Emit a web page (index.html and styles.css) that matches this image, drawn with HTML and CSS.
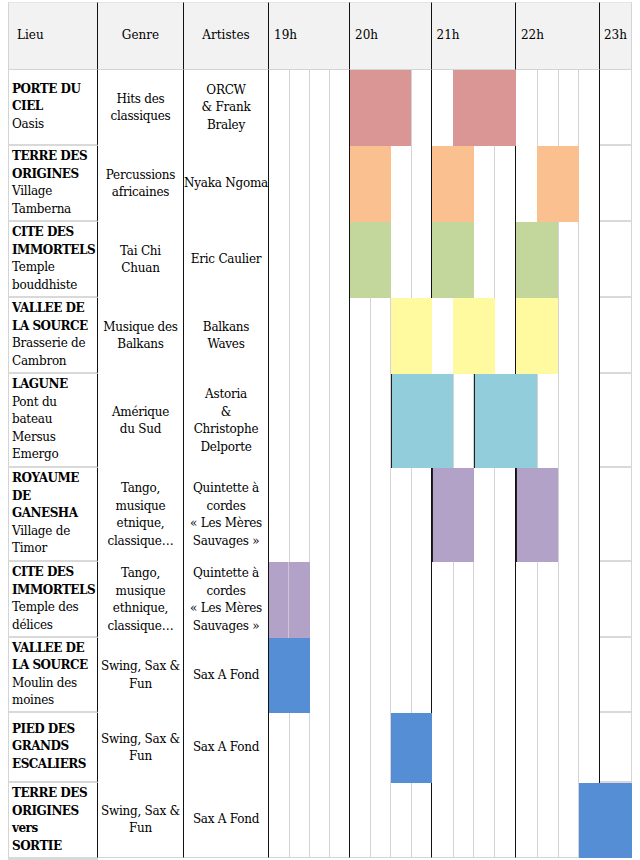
FILE: index.html
```html
<!DOCTYPE html>
<html lang="fr">
<head>
<meta charset="utf-8">
<title>Programme des concerts</title>
<link rel="stylesheet" href="styles.css">
</head>
<body>
<div class="schedule">
  <div class="h h-lieu">Lieu</div>
  <div class="h h-c">Genre</div>
  <div class="h h-c">Artistes</div>
  <div class="h h-hour">19h</div>
  <div class="h h-hour">20h</div>
  <div class="h h-hour">21h</div>
  <div class="h h-hour">22h</div>
  <div class="h h-last">23h</div>

  <div class="lane l19"></div>
  <div class="lane l20"></div>
  <div class="lane l21"></div>
  <div class="lane l22"></div>

  <div class="cell lieu"><div><b>PORTE DU<br>CIEL</b><br>Oasis</div></div>
  <div class="cell info"><div>Hits des<br>classiques</div></div>
  <div class="cell info"><div>ORCW<br>&amp; Frank<br>Braley</div></div>
  <div class="late"></div>

  <div class="cell lieu"><div><b>TERRE DES<br>ORIGINES</b><br>Village<br>Tamberna</div></div>
  <div class="cell info"><div>Percussions<br>africaines</div></div>
  <div class="cell info"><div>Nyaka Ngoma</div></div>
  <div class="late"></div>

  <div class="cell lieu"><div><b>CITE DES<br>IMMORTELS</b><br>Temple<br>bouddhiste</div></div>
  <div class="cell info"><div>Tai Chi<br>Chuan</div></div>
  <div class="cell info"><div>Eric Caulier</div></div>
  <div class="late"></div>

  <div class="cell lieu"><div><b>VALLEE DE<br>LA SOURCE</b><br>Brasserie de<br>Cambron</div></div>
  <div class="cell info"><div>Musique des<br>Balkans</div></div>
  <div class="cell info"><div>Balkans<br>Waves</div></div>
  <div class="late"></div>

  <div class="cell lieu"><div><b>LAGUNE</b><br>Pont du<br>bateau<br>Mersus<br>Emergo</div></div>
  <div class="cell info"><div>Amérique<br>du Sud</div></div>
  <div class="cell info"><div>Astoria<br>&amp;<br>Christophe<br>Delporte</div></div>
  <div class="late"></div>

  <div class="cell lieu"><div><b>ROYAUME<br>DE<br>GANESHA</b><br>Village de<br>Timor</div></div>
  <div class="cell info"><div>Tango,<br>musique<br>etnique,<br>classique…</div></div>
  <div class="cell info"><div>Quintette à<br>cordes<br>«&nbsp;Les Mères<br>Sauvages&nbsp;»</div></div>
  <div class="late"></div>

  <div class="cell lieu"><div><b>CITE DES<br>IMMORTELS</b><br>Temple des<br>délices</div></div>
  <div class="cell info"><div>Tango,<br>musique<br>ethnique,<br>classique…</div></div>
  <div class="cell info"><div>Quintette à<br>cordes<br>«&nbsp;Les Mères<br>Sauvages&nbsp;»</div></div>
  <div class="late"></div>

  <div class="cell lieu"><div><b>VALLEE DE<br>LA SOURCE</b><br>Moulin des<br>moines</div></div>
  <div class="cell info"><div>Swing, Sax &amp;<br>Fun</div></div>
  <div class="cell info"><div>Sax A Fond</div></div>
  <div class="late"></div>

  <div class="cell lieu"><div><b>PIED DES<br>GRANDS<br>ESCALIERS</b></div></div>
  <div class="cell info"><div>Swing, Sax &amp;<br>Fun</div></div>
  <div class="cell info"><div>Sax A Fond</div></div>
  <div class="late"></div>

  <div class="cell lieu last"><div><b>TERRE DES<br>ORIGINES<br>vers<br>SORTIE</b></div></div>
  <div class="cell info last"><div>Swing, Sax &amp;<br>Fun</div></div>
  <div class="cell info last"><div>Sax A Fond</div></div>
  <div class="late"></div>

  <div class="blk red" style="grid-area: 2 / 8 / 3 / 11"></div>
  <div class="blk red" style="grid-area: 2 / 13 / 3 / 16"></div>

  <div class="blk orange" style="grid-area: 3 / 8 / 4 / 10"></div>
  <div class="blk orange" style="grid-area: 3 / 12 / 4 / 14"></div>
  <div class="blk orange" style="grid-area: 3 / 17 / 4 / 19"></div>

  <div class="blk green" style="grid-area: 4 / 8 / 5 / 10"></div>
  <div class="blk green" style="grid-area: 4 / 12 / 5 / 14"></div>
  <div class="blk green" style="grid-area: 4 / 16 / 5 / 18"></div>

  <div class="blk yellow" style="grid-area: 5 / 10 / 6 / 12"></div>
  <div class="blk yellow" style="grid-area: 5 / 13 / 6 / 15"></div>
  <div class="blk yellow" style="grid-area: 5 / 16 / 6 / 18"></div>

  <div class="blk cyan edge" style="grid-area: 6 / 10 / 7 / 13"></div>
  <div class="blk cyan edge" style="grid-area: 6 / 14 / 7 / 17"></div>

  <div class="blk purple edge" style="grid-area: 7 / 12 / 8 / 14"></div>
  <div class="blk purple edge" style="grid-area: 7 / 16 / 8 / 18"></div>

  <div class="blk purple split" style="grid-area: 8 / 4 / 9 / 5"></div>
  <div class="blk purple" style="grid-area: 8 / 5 / 9 / 6"></div>

  <div class="blk blue" style="grid-area: 9 / 4 / 10 / 6"></div>
  <div class="blk blue" style="grid-area: 10 / 10 / 11 / 12"></div>
  <div class="blk blue" style="grid-area: 11 / 19 / 12 / 21"></div>
</div>
</body>
</html>
```

FILE: styles.css
```css
* {
  box-sizing: border-box;
}

body {
  margin: 2px 8px 0;
  background: #ffffff;
  color: #000000;
  font-family: "DejaVu Serif", "Liberation Serif", serif;
  font-size: 12px;
}

.schedule {
  display: grid;
  width: 624px;
  grid-template-columns:
    90px 86px 85px
    repeat(4, 20.25px)
    repeat(4, 20.4px)
    repeat(4, 21.1px)
    repeat(4, 21px)
    32px;
  grid-template-rows: 68px 76px 76px 76px 76px 94px 94px 76px 75px 70px 75px;
  line-height: 17.5px;
  letter-spacing: -0.25px;
}

b {
  letter-spacing: -0.5px;
}

/* header */
.h {
  display: flex;
  align-items: center;
  background: #f2f2f2;
  border-top: 1px solid #e4e4e4;
  border-bottom: 1px solid #d4d4d4;
  border-right: 1px solid #111111;
  letter-spacing: 0;
}

.h-lieu {
  padding-left: 8px;
  border-left: 1px solid #d4d4d4;
}

.h-c {
  justify-content: center;
}

.h-hour {
  grid-column: span 4;
  padding-left: 5px;
}

.h-last {
  padding-left: 4px;
  border-right: 1px solid #d4d4d4;
}

/* time lanes with quarter-hour lines */
.lane {
  grid-row: 2 / -1;
  border-right: 1px solid #111111;
  border-bottom: 1px solid #d4d4d4;
  background-image: linear-gradient(
    to right,
    transparent 0 25%,
    #d4d4d4 25% calc(25% + 1px),
    transparent calc(25% + 1px) 50%,
    #d4d4d4 50% calc(50% + 1px),
    transparent calc(50% + 1px) 75%,
    #d4d4d4 75% calc(75% + 1px),
    transparent calc(75% + 1px)
  );
}

.l19 { grid-column: 4 / 8; }
.l20 { grid-column: 8 / 12; }
.l21 { grid-column: 12 / 16; }
.l22 { grid-column: 16 / 20; }

/* body cells */
.cell {
  display: flex;
  align-items: center;
  white-space: nowrap;
  border-right: 1px solid #111111;
}

.lieu {
  padding-left: 3px;
  border-left: 1px solid #d4d4d4;
  border-bottom: 2px solid #d9d9d9;
}

.lieu.last {
  border-bottom-width: 1px;
}

.info {
  justify-content: center;
  text-align: center;
}

.info.last {
  border-bottom: 1px solid #d4d4d4;
}

.late {
  border-right: 1px solid #d4d4d4;
  border-bottom: 2px solid #d9d9d9;
}

/* coloured time blocks */
.blk {
  min-width: 0;
}

.red { background: #d99694; }
.orange { background: #fac090; }
.green { background: #c3d69b; }
.yellow { background: #fffa9f; }
.cyan { background: #92cddc; }
.purple { background: #b2a2c7; }
.blue { background: #558ed5; }

.edge {
  border-left: 1px solid #222222;
}

.split {
  border-right: 1px solid #cdc6d6;
}
```
